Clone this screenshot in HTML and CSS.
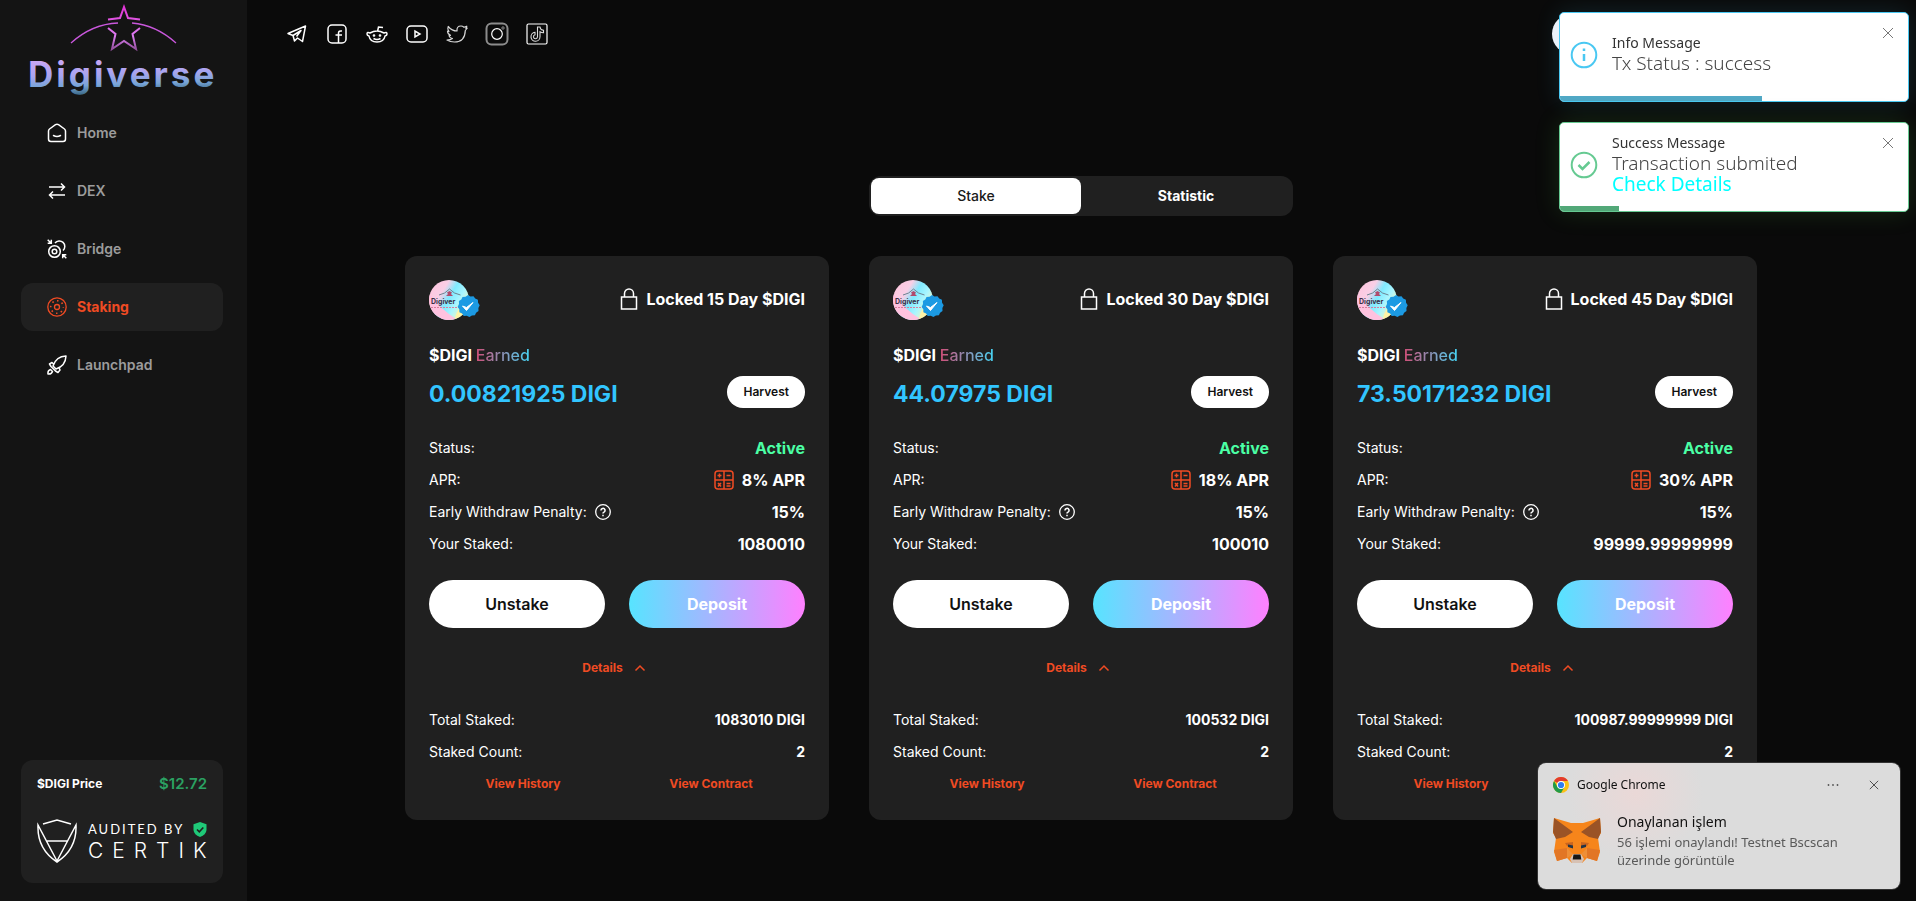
FILE: index.html
```html
<!DOCTYPE html>
<html lang="en">
<head>
<meta charset="utf-8">
<title>Digiverse Staking</title>
<link rel="stylesheet" href="styles.css">
</head>
<body>
<svg class="sprite" aria-hidden="true">
  <defs>
    <linearGradient id="holo" x1="0" y1="0.1" x2="1" y2="0.7">
      <stop offset="0" stop-color="#ffc4dc"/><stop offset="0.33" stop-color="#f9cfe6"/><stop offset="0.52" stop-color="#7feaff"/><stop offset="0.72" stop-color="#a9f5ff"/><stop offset="1" stop-color="#fff7b0"/>
    </linearGradient>
    <linearGradient id="pink" x1="0" y1="0" x2="0" y2="1">
      <stop offset="0" stop-color="#e234d6"/><stop offset="0.7" stop-color="#dc7df2"/><stop offset="1" stop-color="#94509f"/>
    </linearGradient>
    <symbol id="coin" viewBox="0 0 52 40">
      <circle cx="20" cy="20" r="20" fill="url(#holo)"/>
      <path d="M8 36A20 20 0 0 1 1 14Q12 30 27 38.700A20 20 0 0 1 8 36z" fill="#ffc2df"/>
      <path d="M26 39q1-7 5-11l5 4q-4 5-10 7z" fill="#fff3a6"/>
      <path d="M10 15q6-1 10.500-6q4.500 5 11 6" fill="none" stroke="#6d8391" stroke-width="1"/>
      <path d="M18 12.500l2.500-1.500 2.500 1.500-1 1.500 2 2h-7l2-2z" fill="#b04c6d"/>
      <text x="2" y="24" font-family="Inter, sans-serif" font-size="7" font-weight="700" fill="#3b3046">Digiver</text>
      <path d="M2 27.500h28" stroke="#d77f9f" stroke-width="1" stroke-dasharray="2 1"/>
      <path d="M39 15l2.500 1.500 3-.3 1.700 2.400 2.700 1.200.2 3 1.600 2.500-1.300 2.700.1 3-2.400 1.700-1.200 2.600-3 .2-2.500 1.600-2.700-1.300-3 .2-1.600-2.500-2.700-1.200-.1-3-1.600-2.500 1.300-2.700-.1-3 2.400-1.700 1.200-2.500 3-.2z" fill="#1c9ae3"/>
      <path d="M33.500 26l4 4.500 6.500-8-6.500 5z" fill="#fff" stroke="#fff" stroke-width="1"/>
    </symbol>
    <symbol id="lock" viewBox="0 0 18 22" fill="none" stroke="currentColor" stroke-width="1.500">
      <path d="M1.500 9h15v12h-15zM4.500 9V5.500a4.500 4.500 0 0 1 9 0V9"/>
    </symbol>
    <symbol id="calc" viewBox="0 0 20 20" fill="none" stroke="currentColor" stroke-width="1.500">
      <rect x="1" y="1" width="18" height="18" rx="3"/>
      <path d="M10 1v18M1 10h18M3.500 5.500h4M5.500 3.500v4M12.500 5.500h4M12.500 13.500h4M12.500 16h4M4 13l3 3.500M7 13l-3 3.500"/>
    </symbol>
    <symbol id="help" viewBox="0 0 16 16" fill="none" stroke="currentColor" stroke-width="1.300">
      <circle cx="8" cy="8" r="7.300"/><path d="M6 6.500a2 2 0 1 1 3 1.600q-1 .5-1 1.400" stroke-width="1.500"/><path d="M8 10.700v1.500" stroke-width="1.500"/>
    </symbol>
    <symbol id="up" viewBox="0 0 12 12" fill="none" stroke="currentColor" stroke-width="1.500"><path d="M1.500 8.500L6 4l4.500 4.500"/></symbol>
    <symbol id="cross" viewBox="0 0 12 12" fill="none" stroke="currentColor"><path d="M1 1l10 10M11 1L1 11"/></symbol>
  </defs>
</svg>

<div class="layout">
  <aside class="sidebar">
    <a class="brand" href="#" aria-label="Digiverse">
      <svg viewBox="0 0 190 92" width="190" height="92">
        <defs>
          <linearGradient id="word" x1="0" y1="0" x2="0.150" y2="1">
            <stop offset="0.150" stop-color="#cda7f5"/><stop offset="0.550" stop-color="#a9a4f0"/><stop offset="0.800" stop-color="#78a5d8"/><stop offset="1" stop-color="#3f6d8c"/>
          </linearGradient>
        </defs>
        <path d="M43 39Q64 20 90 19M104 19Q128 21 148 39" fill="none" stroke="#c957dc" stroke-width="1.300"/>
        <path d="M80 15.500L92 14L96 3L100 14L112 15.500M80 24L87.500 30L84 45L96 37L108 45L104.500 30L112 24" fill="none" stroke="url(#pink)" stroke-width="2"/>
        <text x="0" y="83" class="brand-word" fill="url(#word)">Digiverse</text>
      </svg>
    </a>
    <nav class="menu">
      <a class="menu-item" href="#"><svg width="20" height="20" viewBox="0 0 20 20" fill="none" stroke="#fff" stroke-width="1.500" stroke-linejoin="round" stroke-linecap="round"><path d="M1.500 8Q1.500 6.800 2.500 6L8.500 1.700Q10 .7 11.500 1.700L17.500 6Q18.500 6.800 18.500 8V16Q18.500 18.500 16 18.500H4Q1.500 18.500 1.500 16z"/><path d="M6.500 12.500q3.500 2 7 0"/></svg>Home</a>
      <a class="menu-item" href="#"><svg width="20" height="20" viewBox="0 0 20 20" fill="none" stroke="#fff" stroke-width="1.500"><path d="M2 6h15M14 2.500L17.500 6L14 9.500M18 14H3M6 10.500L2.500 14L6 17.500"/></svg>DEX</a>
      <a class="menu-item" href="#"><svg width="20" height="20" viewBox="0 0 20 20" fill="none" stroke="#fff" stroke-width="1.500"><circle cx="7.500" cy="12.500" r="5.800"/><circle cx="7.500" cy="12.500" r="2.300"/><path d="M8 4a5.500 5.500 0 1 1 8 7.500M.7.700l3 3M.7 4.300h3.600V.7M19.300 19.300l-3-3M19.300 15.700h-3.600v3.600"/></svg>Bridge</a>
      <a class="menu-item active" href="#" aria-current="page"><svg width="20" height="20" viewBox="0 0 20 20" fill="none" stroke="currentColor" stroke-width="1.300"><circle cx="10" cy="10" r="9.200"/><circle cx="10" cy="10" r="2.500"/><circle cx="10" cy="10" r="6.300" stroke-width="1.600" stroke-dasharray="1.500 3.450" stroke-dashoffset="0.750"/></svg>Staking</a>
      <a class="menu-item" href="#"><svg width="20" height="20" viewBox="0 0 20 20" fill="none" stroke="#fff" stroke-width="1.500" stroke-linejoin="round"><path d="M6 11Q9 1.500 19 1Q18.500 11 9 14zM6.500 9L5 7.500L2.500 9L4 11.500L8.500 16L11 17.500L13 15L12 12.500M3.500 14.500Q.5 15.500 1 19Q4.500 19.500 5.500 16.500z"/></svg>Launchpad</a>
    </nav>
    <section class="price-card">
      <div class="price-row"><span>$DIGI Price</span><strong>$12.72</strong></div>
      <div class="audit">
        <svg width="40" height="44" viewBox="0 0 40 44" fill="none" stroke="#fff" stroke-width="1.500"><path d="M6 5L20 1L34 5M1 6Q0 30 20 43Q40 30 39 6L20 42z M9 22H31"/></svg>
        <div class="audit-text">
          <div class="audit-top"><span>AUDITED BY</span><svg width="14" height="15" viewBox="0 0 14 15"><path d="M7 0l6.500 2.200V8Q13 13 7 15Q1 13 .5 8V2.200z" fill="#1fc978"/><path d="M4 7.500l2.300 2.300L10.300 5.500" fill="none" stroke="#202020" stroke-width="1.600"/></svg></div>
          <div class="audit-name">CERTIK</div>
        </div>
      </div>
    </section>
  </aside>

  <main class="main">
    <header class="topbar">
      <nav class="social">
        <a href="#" aria-label="Telegram"><svg width="20" height="18" viewBox="0 0 20 18" fill="none" stroke="#fff" stroke-width="1.500" stroke-linejoin="round"><path d="M1 8.500L18.500 1L15.500 16.500L10.500 13L7.500 16L6 10.500zM6 10.500L14 5.500L9.500 11.500"/></svg></a>
        <a href="#" aria-label="Facebook"><svg width="20" height="20" viewBox="0 0 20 20" fill="none" stroke="#fff" stroke-width="1.500"><rect x="1" y="1" width="18" height="18" rx="4"/><path d="M11.500 19V9Q11.500 6.500 15 7M8.500 11h6.500"/></svg></a>
        <a href="#" aria-label="Reddit"><svg width="22" height="20" viewBox="0 0 22 20" fill="none" stroke="#fff" stroke-width="1.500"><path d="M4 9Q11 5 18 9Q21 7.500 21 10Q21 11.500 19 12Q18 18 11 18Q4 18 3 12Q1 11.500 1 10Q1 7.500 4 9zM7.500 14.500Q11 16.500 14.500 14.500M11.500 7.500L12.500 3L17 3.500"/><circle cx="8" cy="11.500" r=".6"/><circle cx="14" cy="11.500" r=".6"/></svg></a>
        <a href="#" aria-label="YouTube"><svg width="22" height="18" viewBox="0 0 22 18" fill="none" stroke="#fff" stroke-width="1.500"><rect x="1" y="1" width="20" height="16" rx="4"/><path d="M9 6v6l5-3z"/></svg></a>
        <a href="#" aria-label="Twitter"><svg width="22" height="18" viewBox="0 0 22 18" fill="none" stroke="#d8d8d8" stroke-width="1.200" stroke-linejoin="round"><path d="M1 15Q4.500 15 6.500 13.500Q3.500 13 3 10.500L4.500 10.300Q1.500 9 1.500 6L3 6.500Q1 4 2.200 1.500Q6 6 11 6Q10.500 1 15 1Q16.500 1 18 2.300L20.800 1.200L19.800 3.300L21.300 3L19.300 5.500Q19 17 8.500 17Q4 17 1 15z"/></svg></a>
        <a href="#" aria-label="Instagram"><svg width="24" height="24" viewBox="0 0 24 24" fill="none" stroke="#fff"><rect x="1.500" y="1.500" width="21" height="21" rx="5" stroke="#8c8c8c" stroke-width="2"/><circle cx="12" cy="12" r="5.300" stroke-width="1.200"/><circle cx="18" cy="6" r="1.200" stroke="#aaa" stroke-width=".8"/></svg></a>
        <a href="#" aria-label="TikTok"><svg width="22" height="22" viewBox="0 0 22 22" fill="none" stroke="#fff"><rect x="1" y="1" width="20" height="20" rx="1.500" stroke-width="1.200"/><path d="M11.500 4h2.500q.3 3 3.500 3.300v2.500q-2 0-3.500-1v5a4.500 4.500 0 1 1-5-4.500v2.500a2 2 0 1 0 2.500 2z" stroke="#ddd" stroke-width="1.100"/></svg></a>
      </nav>
      <button class="wallet" aria-label="Wallet"></button>
    </header>

    <div class="content">
      <div class="tabs" role="tablist">
        <button class="tab selected" role="tab" aria-selected="true">Stake</button>
        <button class="tab" role="tab" aria-selected="false">Statistic</button>
      </div>

      <article class="card">
        <div class="card-head"><svg width="52" height="40"><use href="#coin"/></svg><h2><svg width="18" height="22"><use href="#lock"/></svg>Locked 15 Day $DIGI</h2></div>
        <div class="earned">$DIGI <span>Earned</span></div>
        <div class="amount-row"><strong>0.00821925 DIGI</strong><button class="harvest">Harvest</button></div>
        <dl class="facts">
          <div><dt>Status:</dt><dd class="ok">Active</dd></div>
          <div><dt>APR:</dt><dd><svg class="calc" width="20" height="20"><use href="#calc"/></svg>8% APR</dd></div>
          <div><dt>Early Withdraw Penalty:<svg width="16" height="16"><use href="#help"/></svg></dt><dd>15%</dd></div>
          <div><dt>Your Staked:</dt><dd>1080010</dd></div>
        </dl>
        <div class="actions"><button class="unstake">Unstake</button><button class="deposit">Deposit</button></div>
        <button class="details">Details<svg width="12" height="12"><use href="#up"/></svg></button>
        <dl class="facts totals">
          <div><dt>Total Staked:</dt><dd>1083010 DIGI</dd></div>
          <div><dt>Staked Count:</dt><dd>2</dd></div>
        </dl>
        <div class="links"><a href="#">View History</a><a href="#">View Contract</a></div>
      </article>

      <article class="card">
        <div class="card-head"><svg width="52" height="40"><use href="#coin"/></svg><h2><svg width="18" height="22"><use href="#lock"/></svg>Locked 30 Day $DIGI</h2></div>
        <div class="earned">$DIGI <span>Earned</span></div>
        <div class="amount-row"><strong>44.07975 DIGI</strong><button class="harvest">Harvest</button></div>
        <dl class="facts">
          <div><dt>Status:</dt><dd class="ok">Active</dd></div>
          <div><dt>APR:</dt><dd><svg class="calc" width="20" height="20"><use href="#calc"/></svg>18% APR</dd></div>
          <div><dt>Early Withdraw Penalty:<svg width="16" height="16"><use href="#help"/></svg></dt><dd>15%</dd></div>
          <div><dt>Your Staked:</dt><dd>100010</dd></div>
        </dl>
        <div class="actions"><button class="unstake">Unstake</button><button class="deposit">Deposit</button></div>
        <button class="details">Details<svg width="12" height="12"><use href="#up"/></svg></button>
        <dl class="facts totals">
          <div><dt>Total Staked:</dt><dd>100532 DIGI</dd></div>
          <div><dt>Staked Count:</dt><dd>2</dd></div>
        </dl>
        <div class="links"><a href="#">View History</a><a href="#">View Contract</a></div>
      </article>

      <article class="card">
        <div class="card-head"><svg width="52" height="40"><use href="#coin"/></svg><h2><svg width="18" height="22"><use href="#lock"/></svg>Locked 45 Day $DIGI</h2></div>
        <div class="earned">$DIGI <span>Earned</span></div>
        <div class="amount-row"><strong>73.50171232 DIGI</strong><button class="harvest">Harvest</button></div>
        <dl class="facts">
          <div><dt>Status:</dt><dd class="ok">Active</dd></div>
          <div><dt>APR:</dt><dd><svg class="calc" width="20" height="20"><use href="#calc"/></svg>30% APR</dd></div>
          <div><dt>Early Withdraw Penalty:<svg width="16" height="16"><use href="#help"/></svg></dt><dd>15%</dd></div>
          <div><dt>Your Staked:</dt><dd>99999.99999999</dd></div>
        </dl>
        <div class="actions"><button class="unstake">Unstake</button><button class="deposit">Deposit</button></div>
        <button class="details">Details<svg width="12" height="12"><use href="#up"/></svg></button>
        <dl class="facts totals">
          <div><dt>Total Staked:</dt><dd>100987.99999999 DIGI</dd></div>
          <div><dt>Staked Count:</dt><dd>2</dd></div>
        </dl>
        <div class="links"><a href="#">View History</a></div>
      </article>
    </div>
  </main>
</div>

<div class="toasts">
  <div class="toast info" role="status">
    <svg class="toast-icon" width="28" height="28" viewBox="0 0 28 28" fill="none" stroke="currentColor" stroke-width="2"><circle cx="14" cy="14" r="12.300"/><path d="M14 13v7" stroke-width="2.500"/><path d="M14 7.500v2.500" stroke-width="2.500"/></svg>
    <div class="toast-body"><div class="toast-title">Info Message</div><div class="toast-text">Tx Status : success</div></div>
    <button class="close" aria-label="Close"><svg width="12" height="12"><use href="#cross"/></svg></button>
    <div class="bar" style="width:58%"></div>
  </div>
  <div class="toast success" role="status">
    <svg class="toast-icon" width="28" height="28" viewBox="0 0 28 28" fill="none" stroke="currentColor" stroke-width="2"><circle cx="14" cy="14" r="12.300"/><path d="M8.500 14l4 4 7-7" stroke-width="2.500"/></svg>
    <div class="toast-body"><div class="toast-title">Success Message</div><div class="toast-text">Transaction submited</div><a class="toast-text" href="#">Check Details</a></div>
    <button class="close" aria-label="Close"><svg width="12" height="12"><use href="#cross"/></svg></button>
    <div class="bar" style="width:17%"></div>
  </div>
</div>

<div class="notice" role="alert">
  <div class="notice-head">
    <svg width="16" height="16" viewBox="0 0 16 16"><circle cx="8" cy="8" r="8" fill="#fbc116"/><path d="M8 8L1.070 4A8 8 0 0 1 14.930 4H8z" fill="#e33b2e"/><path d="M8 8L4.500 10L1.070 4A8 8 0 0 0 8 16L11.500 10z" fill="#229a48"/><circle cx="8" cy="8" r="4" fill="#fff"/><circle cx="8" cy="8" r="3.100" fill="#2f7df0"/></svg>
    <span>Google Chrome</span>
    <button aria-label="More"><svg width="12" height="12" viewBox="0 0 12 12" fill="#555"><circle cx="1.500" cy="6" r=".9"/><circle cx="6" cy="6" r=".9"/><circle cx="10.500" cy="6" r=".9"/></svg></button>
    <button aria-label="Dismiss"><svg class="dismiss" width="10" height="10" viewBox="0 0 12 12"><use href="#cross" width="12" height="12"/></svg></button>
  </div>
  <div class="notice-body">
    <svg width="48" height="47" viewBox="0 0 48 47">
      <path d="M1 1L18 6H30L47 1L48 16L45 21L47 35L44 44L34 41L29 46H19L14 41L4 44L1 35L3 21L0 16z" fill="#f6851b"/>
      <path d="M1 1L20 15L12 20L3 22L0 15zM47 1L28 15L36 20L45 22L48 15z" fill="#9a5326"/>
      <path d="M12 26L20 25L20 31L14 29zM36 26L28 25L28 31L34 29z" fill="#c9651f"/>
      <path d="M1 33L14 31L14 41L4 44zM47 33L34 31L34 41L44 44z" fill="#e27625"/>
      <path d="M14 31L20 37L14 41zM34 31L28 37L34 41z" fill="#ee8f38"/>
      <path d="M15 27.500l5 1v3l-5-1.500zM33 27.500l-5 1v3l5-1.500z" fill="#233447"/>
      <path d="M17 42L20 37H28L31 42L29 46H19z" fill="#d7c1b3"/>
      <path d="M20.500 37.500h7l.8 5h-8.600z" fill="#161616"/>
    </svg>
    <div><div class="notice-title">Onaylanan işlem</div><p>56 işlemi onaylandı! Testnet Bscscan üzerinde görüntüle</p></div>
  </div>
</div>
</body>
</html>
```

FILE: styles.css
```css
* { box-sizing: border-box; }
body {
  margin: 0;
  background: #0a0a0a;
  color: #fff;
  font: 14px/20px Inter, "Open Sans", sans-serif;
}
h2, p, dl, dd { margin: 0; }
a { color: inherit; text-decoration: none; }
button { border: 0; padding: 0; background: none; color: inherit; font: inherit; cursor: pointer; }
svg { display: block; flex: none; }
.sprite { position: absolute; width: 0; height: 0; }

.layout { display: grid; grid-template-columns: 247px 1fr; min-height: 100vh; }

.sidebar { display: flex; flex-direction: column; padding: 4px 24px 18px 21px; background: #141414; }
.brand { margin: 0 0 13px 7px; }
.brand svg { overflow: visible; }
.brand-word { font: 700 35px Inter, sans-serif; letter-spacing: 3px; }
.menu { display: flex; flex-direction: column; gap: 10px; }
.menu-item {
  display: flex; align-items: center; gap: 10px;
  height: 48px; padding: 0 26px; border-radius: 12px;
  color: #9c9c9c; font-weight: 600;
}
.menu-item.active { background: #202020; color: #f04b23; font-weight: 700; }
.price-card { margin-top: auto; padding: 14px 16px 20px; border-radius: 12px; background: #202020; }
.price-row { display: flex; justify-content: space-between; align-items: center; font-size: 12px; font-weight: 700; }
.price-row strong { color: #2ba162; font-size: 15px; font-weight: 600; }
.audit { display: flex; gap: 11px; margin-top: 25px; }
.audit-text { flex: 1; min-width: 0; }
.audit-top { display: flex; justify-content: space-between; align-items: center; font: 13px/20px Lato, sans-serif; letter-spacing: 2px; }
.audit-name { font: 300 21px/24px Inter, sans-serif; letter-spacing: 9px; }

.main { padding-right: 1px; }
.topbar { display: flex; align-items: center; justify-content: space-between; height: 68px; padding: 0 41px 0 30px; }
.social { display: flex; }
.social a { display: grid; place-items: center; width: 40px; height: 40px; }
.wallet { width: 322px; height: 40px; border-radius: 20px; background: #f5f5fa; }

.content {
  display: grid; grid-template-columns: repeat(3, 1fr); gap: 40px;
  max-width: 1352px; margin: 108px auto 0;
}
.tabs { grid-column: 2; display: flex; padding: 2px; border-radius: 12px; background: #202020; }
.tab { flex: 1; height: 36px; border-radius: 8px; font-size: 14px; font-weight: 700; }
.tab.selected { background: #fff; color: #1a1a1a; font-weight: 500; }
.card { display: flex; flex-direction: column; padding: 24px 24px 20px; border-radius: 12px; background: #202020; }
.card:nth-of-type(1) { grid-column: 1; }

.card-head { display: flex; justify-content: space-between; align-items: center; height: 40px; }
.card-head h2 { display: flex; align-items: center; gap: 8px; padding-bottom: 2px; font-size: 16px; font-weight: 700; }
.earned { margin-top: 25px; font-size: 16px; font-weight: 700; }
.earned span {
  background: linear-gradient(90deg, #d04f78, #46d5f5);
  background-clip: text; -webkit-background-clip: text;
  color: transparent; font-weight: 500;
}
.amount-row { display: flex; justify-content: space-between; align-items: center; height: 32px; margin-top: 11px; }
.amount-row strong { padding-top: 3px; color: #32c5ff; font-size: 23px; font-weight: 700; }
.harvest { height: 32px; padding: 0 16px; border-radius: 16px; background: #fff; color: #111; font-size: 12px; font-weight: 600; }
.facts { margin-top: 24px; }
.facts div { display: flex; justify-content: space-between; align-items: center; height: 32px; }
.facts dt { display: flex; align-items: center; gap: 8px; font-size: 14px; }
.facts dd { display: flex; align-items: center; gap: 8px; font-size: 16px; font-weight: 700; }
.facts .ok { color: #4bffa5; }
.calc { color: #f04b23; }
.actions { display: grid; grid-template-columns: 1fr 1fr; gap: 24px; margin-top: 20px; }
.actions button { height: 48px; border-radius: 24px; font-size: 16px; font-weight: 600; }
.unstake { background: #fff; color: #111; }
.deposit { background: linear-gradient(90deg, #57e4ff, #ff80ff); }
.actions .deposit { font-weight: 700; }
.details { display: flex; align-items: center; align-self: center; gap: 11px; margin-top: 30px; padding-right: 6px; color: #f04b23; font-size: 12px; font-weight: 700; }
.totals { margin-top: 26px; }
.totals dd { font-size: 14px; }
.links { display: grid; grid-template-columns: 1fr 1fr; height: 32px; align-items: center; text-align: center; color: #f04b23; font-size: 12px; font-weight: 700; }

.toasts { position: fixed; top: 12px; right: 7px; display: grid; gap: 20px; width: 350px; font-family: "Noto Sans", "Open Sans", sans-serif; }
.toast {
  position: relative; display: flex; align-items: center; gap: 14px;
  height: 90px; padding: 0 14px 5px 10px; overflow: hidden;
  border: 1px solid; border-radius: 5px; background: #fff;
}
.toast.info { border-color: #4ac8f2; color: #4ac8f2; box-shadow: 0 0 24px rgba(74, 200, 242, .14); }
.toast.success { border-color: #66ca92; color: #66ca92; box-shadow: 0 0 24px rgba(80, 190, 60, .18); }
.toast-body { flex: 1; padding-bottom: 2px; }
.toast-title { color: #333; font-size: 14px; line-height: 20px; }
.toast-text { display: block; color: #444; font-size: 19px; font-weight: 300; line-height: 21px; }
a.toast-text { color: #00ffff; font-weight: 400; }
.close { align-self: flex-start; margin-top: 14px; color: #777; }
.bar { position: absolute; left: 0; bottom: 0; height: 5px; background: #50a8c5; }
.success .bar { background: #52a878; }

.notice {
  position: fixed; right: 16px; bottom: 12px; width: 362px; padding: 12px 15px 20px; border-radius: 8px;
  background: radial-gradient(circle at 27% 24%, #ead8d7, #dcdcdc 24%);
  box-shadow: 0 0 0 1px #333;
  color: #111; font-family: "Noto Sans", "Open Sans", sans-serif;
}
.notice-head { display: flex; align-items: center; gap: 8px; height: 20px; font-size: 12px; }
.notice-head span { flex: 1; }
.notice-head button { padding: 0 6px; }
.notice-head button:last-child { margin-left: 10px; }
.dismiss { color: #333; }
.notice-body { display: flex; gap: 16px; margin-top: 15px; font-size: 13px; line-height: 18px; }
.notice-body svg { margin-top: 7px; }
.notice-title { font-size: 14px; line-height: 23px; }
.notice-body p { color: #5a5a5a; }
```
